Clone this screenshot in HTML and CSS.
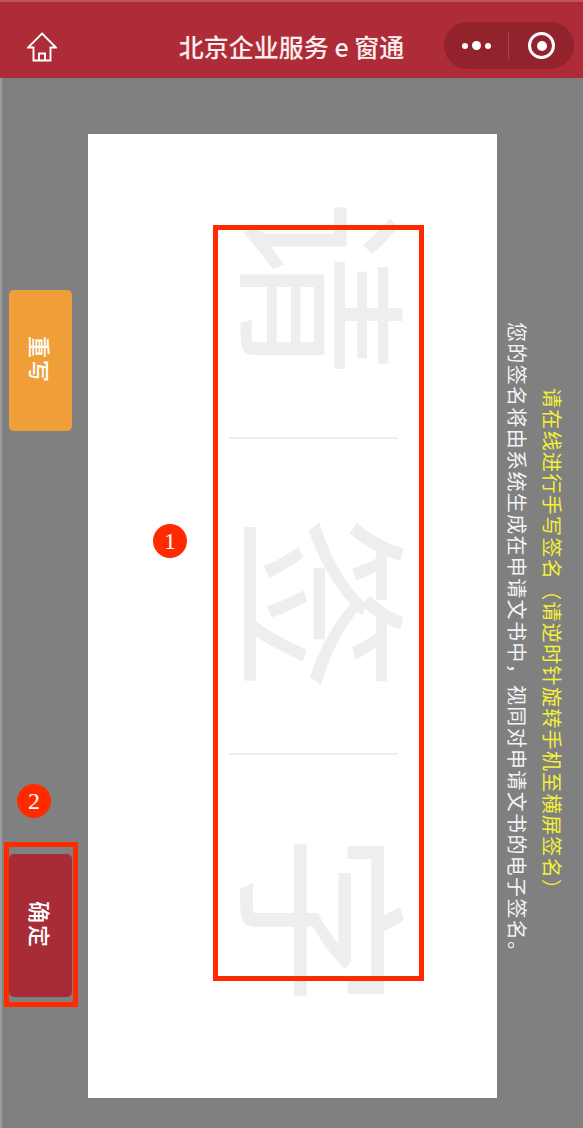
FILE: index.html
```html
<!DOCTYPE html>
<html lang="zh-CN">
<head>
<meta charset="utf-8">
<title>北京企业服务e窗通</title>
<link rel="stylesheet" href="styles.css">
</head>
<body>
<header class="nav">
  <svg class="home" viewBox="0 0 30 30" width="30" height="30" aria-hidden="true">
    <path d="M15 1.5 L29 15.5 H23.5 V28.5 H6.5 V15.5 H1 Z M12 28.5 V21.5 H18 V28.5" fill="none" stroke="#fff" stroke-width="1.9" stroke-linejoin="miter"/>
  </svg>
  <h1 class="title">北京企业服务 e 窗通</h1>
  <div class="capsule">
    <span class="dots"><i class="dot"></i><i class="dot dot-big"></i><i class="dot"></i></span>
    <span class="sep"></span>
    <span class="target"><i></i></span>
  </div>
</header>
<main class="stage">
  <div class="actions">
    <button class="btn btn-reset">重写</button>
    <button class="btn btn-ok">确定</button>
  </div>
  <section class="pad">
    <div class="guide">
      <span class="glyph">请</span>
      <span class="rule"></span>
      <span class="glyph">签</span>
      <span class="rule"></span>
      <span class="glyph">字</span>
    </div>
  </section>
  <aside class="notes">
    <p class="note note-warn">请在线进行手写签名（请逆时针旋转手机至横屏签名）</p>
    <p class="note note-info">您的签名将由系统生成在申请文书中，视同对申请文书的电子签名。</p>
  </aside>
  <div class="mark mark-pad"></div>
  <div class="mark mark-ok"></div>
  <span class="badge badge-1">1</span>
  <span class="badge badge-2">2</span>
</main>
</body>
</html>
```
FILE: styles.css
```css
* { box-sizing: border-box; }
html, body { margin: 0; padding: 0; }
body {
  width: 583px;
  height: 1128px;
  overflow: hidden;
  background: #808080;
  font-family: "Noto Sans CJK SC", "Liberation Sans", sans-serif;
}
.nav {
  height: 78px;
  display: flex;
  align-items: center;
  padding: 11px 9px 0 27px;
  background: #ad2c37;
  border-top: 2px solid #bb5660;
  position: relative;
}
.home { flex: none; margin-top: 3px; }
.title {
  margin: 0;
  position: absolute;
  left: 0;
  right: 0;
  top: 27px;
  text-align: center;
  font-size: 25px;
  line-height: 34px;
  font-weight: 500;
  color: #fbeeee;
  white-space: nowrap;
}
.capsule {
  margin-left: auto;
  width: 130px;
  height: 47px;
  border-radius: 24px;
  background: #92232d;
  display: flex;
  align-items: center;
  position: relative;
  z-index: 1;
}
.dots {
  width: 64px;
  display: flex;
  justify-content: center;
  align-items: center;
  gap: 4px;
}
.dot { width: 6px; height: 6px; border-radius: 50%; background: #fff; }
.dot-big { width: 9px; height: 9px; }
.sep { width: 1px; height: 26px; background: #a84650; }
.target {
  margin-left: 19px;
  width: 27px;
  height: 27px;
  border: 3px solid #fff;
  border-radius: 50%;
  display: flex;
  align-items: center;
  justify-content: center;
}
.target i { width: 10px; height: 10px; border-radius: 50%; background: #fff; }

.stage {
  height: 1050px;
  display: flex;
  position: relative;
  border-left: 2px solid #9c9c9c;
}
.actions {
  width: 86px;
  flex: none;
  padding: 212px 0 0 7px;
  display: flex;
  flex-direction: column;
  gap: 423px;
}
.btn {
  width: 63px;
  border: 0;
  border-radius: 5px;
  padding: 0;
  color: #fff;
  font: 500 22px/1 "Noto Sans CJK SC", sans-serif;
  letter-spacing: 2px;
  writing-mode: vertical-rl;
  text-orientation: sideways;
  display: flex;
  align-items: center;
  justify-content: center;
}
.btn-reset { height: 141px; background: #f09e38; }
.btn-ok { height: 143px; background: #a82c38; }

.pad {
  flex: none;
  width: 409px;
  height: 964px;
  margin-top: 56px;
  background: #fff;
  padding: 66px 0 0 140px;
}
.guide {
  width: 170px;
  display: flex;
  flex-direction: column;
  align-items: center;
  color: #eeeeee;
}
.glyph {
  font-size: 176px;
  line-height: 176px;
  margin-left: 34px;
  writing-mode: vertical-rl;
  text-orientation: sideways;
}
.rule {
  width: 169px;
  height: 2px;
  background: #eeeeee;
  margin: 61px 0 77px;
}
.notes {
  flex: 1;
  display: flex;
  flex-direction: row-reverse;
  padding: 244px 13px 0 0;
}
.note {
  margin: 0;
  writing-mode: vertical-rl;
  text-orientation: sideways;
  font-size: 20px;
  line-height: 35px;
  letter-spacing: 1.35px;
  white-space: nowrap;
}
.note-warn { color: #f3f03c; margin-top: 66px; }
.note-info { color: #f4f4f4; }

.mark {
  position: absolute;
  border: 5px solid #ff2a00;
}
.mark-pad { left: 211px; top: 147px; width: 211px; height: 756px; }
.mark-ok { left: 2px; top: 764px; width: 74px; height: 165px; }
.badge {
  position: absolute;
  width: 34px;
  height: 34px;
  border-radius: 50%;
  background: #ff2a00;
  color: #fff;
  font: 24px/34px "Liberation Serif", serif;
  text-align: center;
}
.badge-1 { left: 151px; top: 446px; }
.badge-2 { left: 15px; top: 706px; }
```
